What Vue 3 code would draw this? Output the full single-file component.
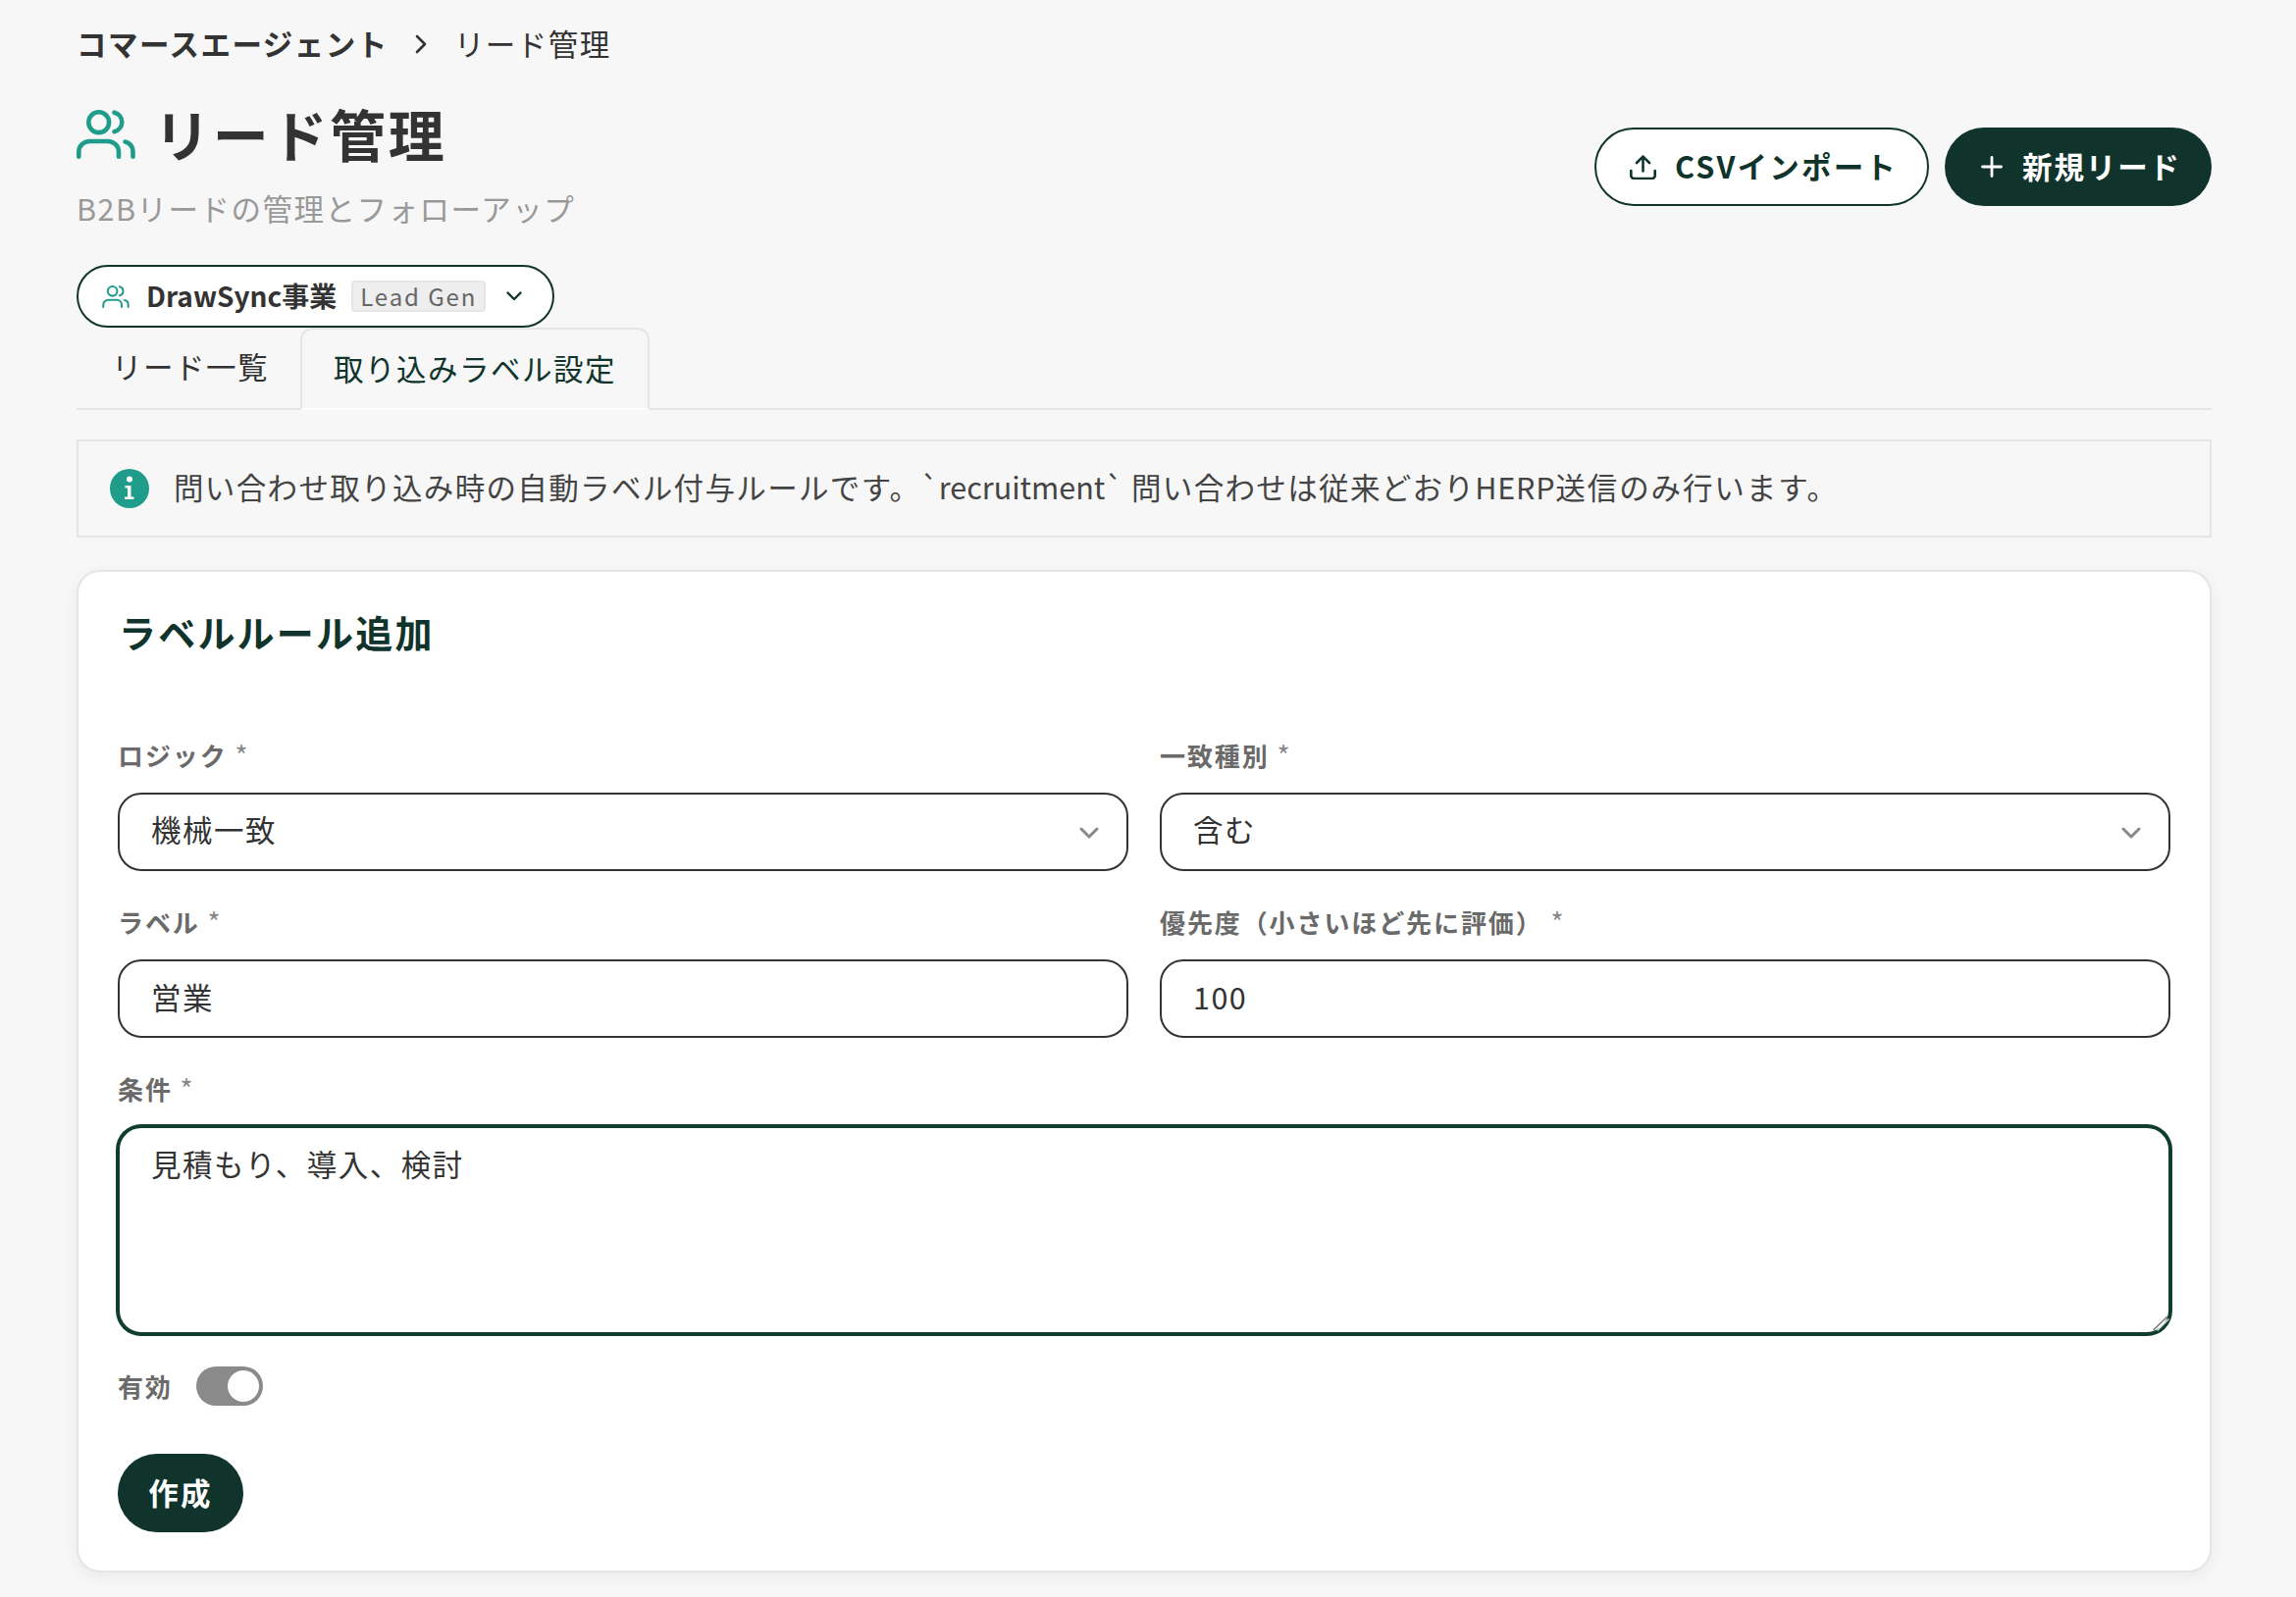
<script setup>
const usersPaths = [
  'M2.3 47.7v-4.7a11 11 0 0 1 11-11H32a11 11 0 0 1 11 11v4.7',
  'M38.5 2.7a10 10 0 0 1 0 19.5',
  'M49.5 32.5a10 10 0 0 1 8 10v5.2'
]
</script>

<template>
  <div class="page">
    <nav class="crumbs">
      <span class="crumb-root">コマースエージェント</span>
      <svg class="crumb-sep" viewBox="0 0 12 20" width="12" height="20" fill="none" stroke="#333" stroke-width="2.6" stroke-linecap="round" stroke-linejoin="round"><path d="M2 2l8 8-8 8" /></svg>
      <span class="crumb-cur">リード管理</span>
    </nav>

    <header class="head">
      <div>
        <div class="title-row">
          <svg class="title-icon" viewBox="0 0 60 50" fill="none" stroke="#1f9c8a" stroke-width="4.6" stroke-linecap="round">
            <circle cx="22.7" cy="12.7" r="10.4" />
            <path v-for="d in usersPaths" :key="d" :d="d" />
          </svg>
          <h1>リード管理</h1>
        </div>
        <p class="sub">B2Bリードの管理とフォローアップ</p>
      </div>
      <div class="actions">
        <button class="btn btn-outline" type="button">
          <svg viewBox="0 0 27 25" width="27" height="25" fill="none" stroke="#10342b" stroke-width="2.6" stroke-linecap="round" stroke-linejoin="round"><path d="M1.3 16v5a3 3 0 0 0 3 3h18.400a3 3 0 0 0 3-3v-5M13.500 16.500V1.600M7 8l6.500-6.400L20 8" /></svg>
          <span class="btn-text">CSVインポート</span>
        </button>
        <button class="btn btn-solid btn-new" type="button">
          <svg viewBox="0 0 22 22" width="22" height="22" fill="none" stroke="#fff" stroke-width="2.8" stroke-linecap="round"><path d="M11 1.500v19M1.500 11h19" /></svg>
          <span class="btn-text">新規リード</span>
        </button>
      </div>
    </header>

    <button class="scope" type="button">
      <svg class="scope-icon" viewBox="0 0 60 50" fill="none" stroke="#1f9c8a" stroke-width="4.4" stroke-linecap="round">
        <circle cx="22.7" cy="12.7" r="10.4" />
        <path v-for="d in usersPaths" :key="d" :d="d" />
      </svg>
      <span class="scope-name">DrawSync事業</span>
      <span class="badge">Lead Gen</span>
      <svg class="scope-chev" viewBox="0 0 16 10" width="16" height="10" fill="none" stroke="#10342b" stroke-width="2.4" stroke-linecap="round" stroke-linejoin="round"><path d="M1.500 1.500L8 8l6.500-6.500" /></svg>
    </button>

    <div class="tabs">
      <div class="tab">リード一覧</div>
      <div class="tab tab-active">取り込みラベル設定</div>
    </div>

    <div class="alert">
      <svg class="alert-icon" viewBox="0 0 40 40" width="40" height="40">
        <circle cx="20" cy="20" r="20" fill="#1f9c8a" />
        <circle cx="20" cy="10.500" r="3" fill="#fff" />
        <path d="M15.500 17h6v11.500h3V31h-9.500v-2.500h3v-9h-2.500z" fill="#fff" />
      </svg>
      <p>問い合わせ取り込み時の自動ラベル付与ルールです。<span class="tight">`recruitment`</span> 問い合わせは従来どおり<span class="tight-herp">HERP</span><span class="tail">送信のみ行います。</span></p>
    </div>

    <section class="card">
      <h2>ラベルルール追加</h2>
      <div class="grid">
        <div class="field">
          <label>ロジック <i>*</i></label>
          <div class="select-wrap">
            <select class="control"><option>機械一致</option></select>
            <svg viewBox="0 0 20 12" width="20" height="12" fill="none" stroke="#888" stroke-width="3" stroke-linecap="round" stroke-linejoin="round"><path d="M2 2l8 8 8-8" /></svg>
          </div>
        </div>
        <div class="field">
          <label>一致種別 <i>*</i></label>
          <div class="select-wrap">
            <select class="control"><option>含む</option></select>
            <svg viewBox="0 0 20 12" width="20" height="12" fill="none" stroke="#888" stroke-width="3" stroke-linecap="round" stroke-linejoin="round"><path d="M2 2l8 8 8-8" /></svg>
          </div>
        </div>
        <div class="field">
          <label>ラベル <i>*</i></label>
          <input class="control input" value="営業" />
        </div>
        <div class="field">
          <label>優先度（小さいほど先に評価） <i>*</i></label>
          <input class="control input" value="100" />
        </div>
        <div class="field wide">
          <label>条件 <i>*</i></label>
          <div class="area-wrap">
            <textarea class="area">見積もり、導入、検討</textarea>
            <svg class="grip" viewBox="0 0 20 20" width="20" height="20" fill="none" stroke-linecap="round">
              <path d="M17 2L3 15.500" stroke="#777" stroke-width="1.500" />
              <path d="M18 5L7 16" stroke="#ddd" stroke-width="1.500" />
            </svg>
          </div>
        </div>
      </div>

      <div class="switch-row">
        <span>有効</span>
        <span class="switch"><span class="knob"></span></span>
      </div>

      <button class="btn btn-solid create" type="button"><span class="btn-text">作成</span></button>
    </section>
  </div>
</template>

<style scoped>
.page {
  box-sizing: border-box;
  min-height: 1628px;
  padding: 24px 86px 0 78px;
  background: #f7f7f7;
  color: #333;
  font-family: "Noto Sans CJK JP", "Noto Sans", sans-serif;
  font-size: 30.5px;
  letter-spacing: 1.5px;
}
.crumbs {
  display: flex;
  align-items: center;
  height: 40px;
  line-height: 40px;
}
.crumb-root {
  font-weight: 700;
}
.crumb-sep {
  margin: 1px 28px 0 27px;
}
.head {
  display: flex;
  justify-content: space-between;
  margin-top: 33px;
}
.title-row {
  display: flex;
  align-items: center;
  gap: 19px;
  height: 76px;
}
.title-icon {
  width: 60px;
  height: 50px;
  margin-top: 4px;
}
h1 {
  margin: 0;
  font-size: 57px;
  line-height: 76px;
  font-weight: 700;
  letter-spacing: 2.7px;
}
.sub {
  margin: 17px 0 0;
  line-height: 44px;
  color: #999;
}
.actions {
  display: flex;
  gap: 16px;
  margin-top: 33px;
}
.btn {
  box-sizing: border-box;
  display: inline-flex;
  align-items: center;
  justify-content: center;
  height: 80px;
  padding: 0;
  border-radius: 40px;
  font: inherit;
  font-weight: 700;
  letter-spacing: 2.2px;
  gap: 20px;
}
.btn-text {
  padding-bottom: 3px;
}
.btn-outline {
  width: 341px;
  padding-left: 4px;
  gap: 19px;
  background: #fff;
  border: 2px solid #10342b;
  color: #10342b;
}
.btn-solid {
  width: 272px;
  background: #10342b;
  border: 0;
  color: #fff;
}
.btn-new {
  padding-left: 6px;
  letter-spacing: 1.9px;
}
.scope {
  box-sizing: border-box;
  display: flex;
  align-items: center;
  width: 487px;
  height: 64px;
  margin-top: 36px;
  padding: 0 0 0 24px;
  background: #fff;
  border: 2px solid #10342b;
  border-radius: 32px;
  font: inherit;
  font-size: 28px;
  font-weight: 700;
  letter-spacing: 0;
  color: #333;
}
.scope-icon {
  width: 28px;
  height: 23px;
  margin-right: 17px;
}
.scope-name {
  padding-bottom: 3px;
}
.badge {
  box-sizing: border-box;
  display: inline-flex;
  align-items: center;
  justify-content: center;
  width: 137px;
  height: 32px;
  margin-left: 15px;
  padding-bottom: 2px;
  background: #eee;
  border: 2px solid #e6e6e6;
  border-radius: 4px;
  font-size: 24px;
  font-weight: 400;
  letter-spacing: 1.9px;
  color: #666;
}
.scope-chev {
  margin-left: 21px;
}
.tabs {
  display: flex;
  border-bottom: 2px solid #e5e5e5;
}
.tab {
  box-sizing: border-box;
  width: 228px;
  height: 84px;
  padding: 0 36px;
  line-height: 78px;
  margin-bottom: -2px;
  white-space: nowrap;
}
.tab-active {
  width: 356px;
  padding: 0 32px;
  color: #10342b;
  border: 2px solid #e5e5e5;
  border-bottom-color: #fff;
  border-radius: 12px 12px 0 0;
}
.alert {
  box-sizing: border-box;
  display: flex;
  align-items: center;
  gap: 25px;
  height: 100px;
  margin-top: 30px;
  padding: 0 32px;
  border: 2px solid #e5e5e5;
}
.alert-icon {
  flex: none;
}
.alert p {
  margin: 0;
  padding-bottom: 5px;
  color: #444;
  white-space: nowrap;
  letter-spacing: 1.35px;
}
.tight {
  letter-spacing: 0;
}
.tight-herp {
  letter-spacing: 0.8px;
}
.tail {
  letter-spacing: 1.9px;
}
.card {
  box-sizing: border-box;
  margin-top: 33px;
  padding: 36px 40px 39px;
  height: 1022px;
  background: #fff;
  border: 2px solid #e5e5e5;
  border-radius: 24px;
  box-shadow: 0 4px 16px rgba(0, 0, 0, 0.06);
}
h2 {
  margin: 0 0 0 1px;
  font-size: 38px;
  line-height: 50px;
  font-weight: 700;
  color: #10342b;
  letter-spacing: 2.2px;
}
.grid {
  display: grid;
  grid-template-columns: 1fr 1fr;
  column-gap: 32px;
  row-gap: 34px;
  margin-top: 83px;
}
.wide {
  grid-column: 1 / -1;
}
label {
  display: block;
  height: 36px;
  margin-bottom: 20px;
  font-size: 26px;
  line-height: 34px;
  font-weight: 700;
  letter-spacing: 1.9px;
  color: #6a6a6a;
}
label i {
  font-style: normal;
  font-weight: 400;
  font-size: 28px;
  color: #888;
}
.control {
  box-sizing: border-box;
  display: block;
  width: 100%;
  height: 80px;
  padding: 0 32px 6px;
  background: #fff;
  border: 2px solid #333;
  border-radius: 24px;
  font: inherit;
  font-weight: 400;
  letter-spacing: 1.5px;
  color: #333;
  outline: none;
  appearance: none;
}
.input {
  padding-bottom: 4px;
}
.select-wrap {
  position: relative;
}
.select-wrap svg {
  position: absolute;
  top: 35px;
  right: 30px;
}
.area-wrap {
  position: relative;
}
.area {
  box-sizing: border-box;
  display: block;
  width: 100%;
  height: 212px;
  padding: 14px 32px;
  background: #fff;
  border: 2px solid #0f3d2e;
  border-radius: 24px;
  box-shadow: 0 0 0 2px #0f3d2e;
  font: inherit;
  line-height: 44px;
  letter-spacing: 1.5px;
  color: #333;
  outline: none;
  resize: none;
}
.grip {
  position: absolute;
  right: 0;
  bottom: 0;
}
.switch-row {
  display: flex;
  align-items: center;
  gap: 25px;
  margin-top: 33px;
  font-size: 26px;
  font-weight: 700;
  letter-spacing: 1.7px;
  color: #6a6a6a;
}
.switch-row > span:first-child {
  padding-bottom: 2px;
}
.switch {
  display: flex;
  justify-content: flex-end;
  align-items: center;
  box-sizing: border-box;
  width: 68px;
  height: 40px;
  padding: 4px;
  border-radius: 20px;
  background: #8a8a8a;
}
.knob {
  width: 32px;
  height: 32px;
  border-radius: 50%;
  background: #fff;
}
.create {
  display: flex;
  width: 128px;
  margin-top: 49px;
}
</style>

<style>
html,
body {
  margin: 0;
  background: #f7f7f7;
}
</style>
